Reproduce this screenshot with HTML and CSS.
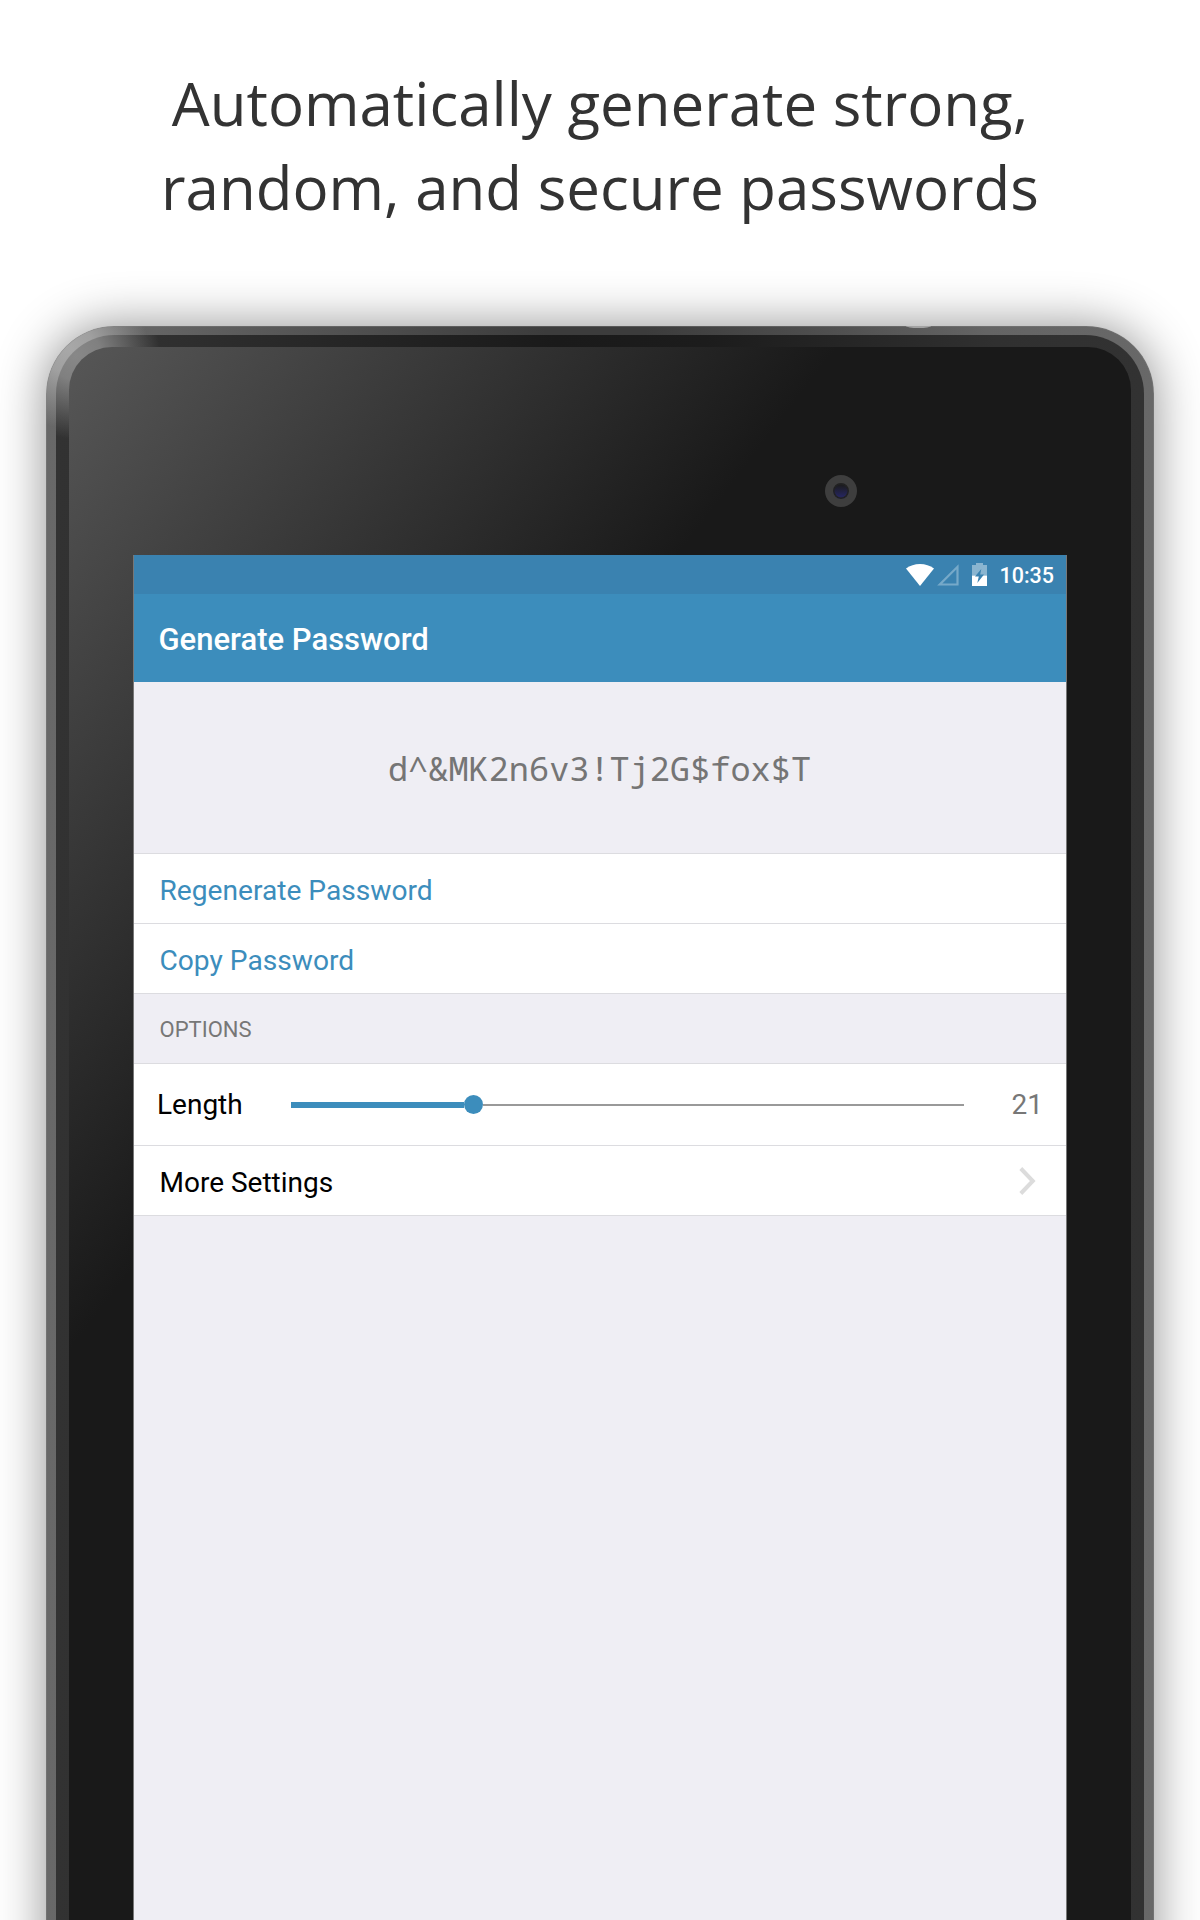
FILE: index.html
```html
<!DOCTYPE html>
<html lang="en">
<head>
<meta charset="utf-8">
<title>Generate Password</title>
<link rel="stylesheet" href="styles.css">
</head>
<body>
<main class="page">
  <h1 class="headline">Automatically generate strong,<br>random, and secure passwords</h1>
  <div class="device">
    <span class="power-button"></span>
    <div class="bezel">
      <div class="glass">
        <span class="camera"></span>
        <section class="screen">
          <div class="status-bar">
            <svg class="wifi" width="28" height="22" viewBox="0 0 28 22"><path d="M0 4.600C4 1.500 8.700 0 14 0s10 1.500 14 4.600L14 22z" fill="#fff"/></svg>
            <svg class="signal" width="22" height="22" viewBox="0 0 22 22"><path d="M20.500 2.800V20.500H2.800z" fill="none" stroke="#76a9c9" stroke-width="2.200"/></svg>
            <svg class="battery" width="15" height="23" viewBox="0 0 15 23"><path d="M4 0h7v2h4v10.500H0V2h4z" fill="#8ab5d0"/><path d="M0 12.500h15V23H0z" fill="#fff"/><path d="M9.300 6 3 13.500h3.800L5.300 20 12 11.500H8.200z" fill="#3a82b0"/></svg>
            <span class="clock">10:35</span>
          </div>
          <header class="app-bar">Generate Password</header>
          <div class="password">d^&amp;MK2n6v3!Tj2G$fox$T</div>
          <div class="row action">Regenerate Password</div>
          <div class="row action">Copy Password</div>
          <div class="row section">OPTIONS</div>
          <div class="row length">
            <span class="label">Length</span>
            <div class="slider"><span class="fill"></span><span class="thumb"></span><span class="track"></span></div>
            <span class="value">21</span>
          </div>
          <div class="row more">
            <span>More Settings</span>
            <svg width="17" height="28" viewBox="0 0 17 28"><path d="M1.800 1.500 13.800 14 1.800 26.500" fill="none" stroke="#dcdcdc" stroke-width="4"/></svg>
          </div>
        </section>
      </div>
    </div>
  </div>
</main>
</body>
</html>
```
FILE: styles.css
```css
* { box-sizing: border-box; }
body { margin: 0; background: #fff; }
.page {
  width: 1200px;
  height: 1920px;
  overflow: hidden;
  display: flex;
  flex-direction: column;
  align-items: center;
  font-family: Roboto, sans-serif;
}
.headline {
  flex: none;
  height: 326px;
  margin: 0;
  padding-top: 61px;
  font: 400 60px/84px "Open Sans", sans-serif;
  color: #333;
  text-align: center;
  white-space: nowrap;
}
.device {
  position: relative;
  flex: none;
  width: 1108px;
  height: 1700px;
  padding: 9px 10px;
  border-radius: 68px;
  box-shadow: 0 0 50px rgba(0, 0, 0, .44), inset 0 0 0 1px rgba(130, 130, 130, .4);
  background:
    radial-gradient(circle at 22px 22px, #a8a8a8 0, #a0a0a0 25px, rgba(104, 104, 104, 0) 80px),
    linear-gradient(90deg, #686868 0, #646464 110px, #3c3c3c 500px, #3c3c3c 600px, #505050 790px, #646464 940px, #686868 100%);
}
.power-button {
  position: absolute;
  left: 860px;
  top: 0;
  width: 25px;
  height: 2px;
  border-radius: 0 0 50% 50% / 0 0 100% 100%;
  background: #a3a3a3;
}
.bezel {
  height: 100%;
  padding: 12px 13px;
  border-radius: 59px;
  background:
    radial-gradient(circle at 20px 20px, #888 0, #808080 25px, rgba(50, 50, 50, 0) 84px),
    linear-gradient(90deg, #323232 0, #303030 100px, #1a1a1a 500px, #1c1c1c 650px, #303030 940px, #323232 100%);
}
.glass {
  display: flex;
  flex-direction: column;
  height: 100%;
  padding: 0 64px;
  border-radius: 43px;
  background: linear-gradient(127.4deg, #575757 0, #191919 610px);
}
.camera {
  flex: none;
  align-self: flex-start;
  width: 32px;
  height: 32px;
  margin: 128px 0 48px 692px;
  border: 8px solid #3e3e3e;
  border-radius: 50%;
  background: linear-gradient(#1c1c20 15%, #25255a 80%);
  box-shadow: inset 0 0 0 1.5px #222;
}
.screen {
  flex: 1;
  width: 934px;
  border: solid #777;
  border-width: 0 1px;
  background: #efeef4;
}
.status-bar {
  display: flex;
  align-items: center;
  justify-content: flex-end;
  height: 39px;
  padding-right: 12px;
  background: #3a82b0;
  color: #fff;
}
.signal { margin: 0 13px 0 3px; }
.clock { margin-left: 12px; padding-top: 2px; font-size: 21.500px; font-weight: 500; line-height: 39px; }
.app-bar {
  height: 88px;
  padding-left: 24.500px;
  background: #3c8dbc;
  color: #fff;
  font-size: 31px;
  font-weight: 500;
  line-height: 91px;
}
.password {
  height: 172px;
  padding-right: 1px;
  border-bottom: 1px solid #dcdce0;
  text-align: center;
  color: #757575;
  font: 33.6px/172px "Droid Sans Mono", "Noto Sans Mono", "DejaVu Sans Mono", monospace;
}
.row {
  display: flex;
  align-items: center;
  height: 70px;
  padding: 3px 25.500px 0;
  border-bottom: 1px solid #dcdce0;
  background: #fff;
  font-size: 28px;
  color: #000;
}
.action { color: #3c8dbc; font-size: 28.150px; }
.section { padding-top: 1px; background: #efeef4; color: #777; font-size: 22px; }
.length { height: 82px; padding: 0 23px; }
.label { width: 134px; }
.slider { display: flex; align-items: center; width: 673px; }
.fill { width: 173px; height: 6px; background: #3c8dbc; }
.thumb { width: 19px; height: 19px; border-radius: 50%; background: #3c8dbc; }
.track { flex: 1; height: 2px; background: #999; }
.value { flex: 1; text-align: right; color: #777; }
.more { justify-content: space-between; }
.more svg { margin: -3px 5px 0 0; }
```
